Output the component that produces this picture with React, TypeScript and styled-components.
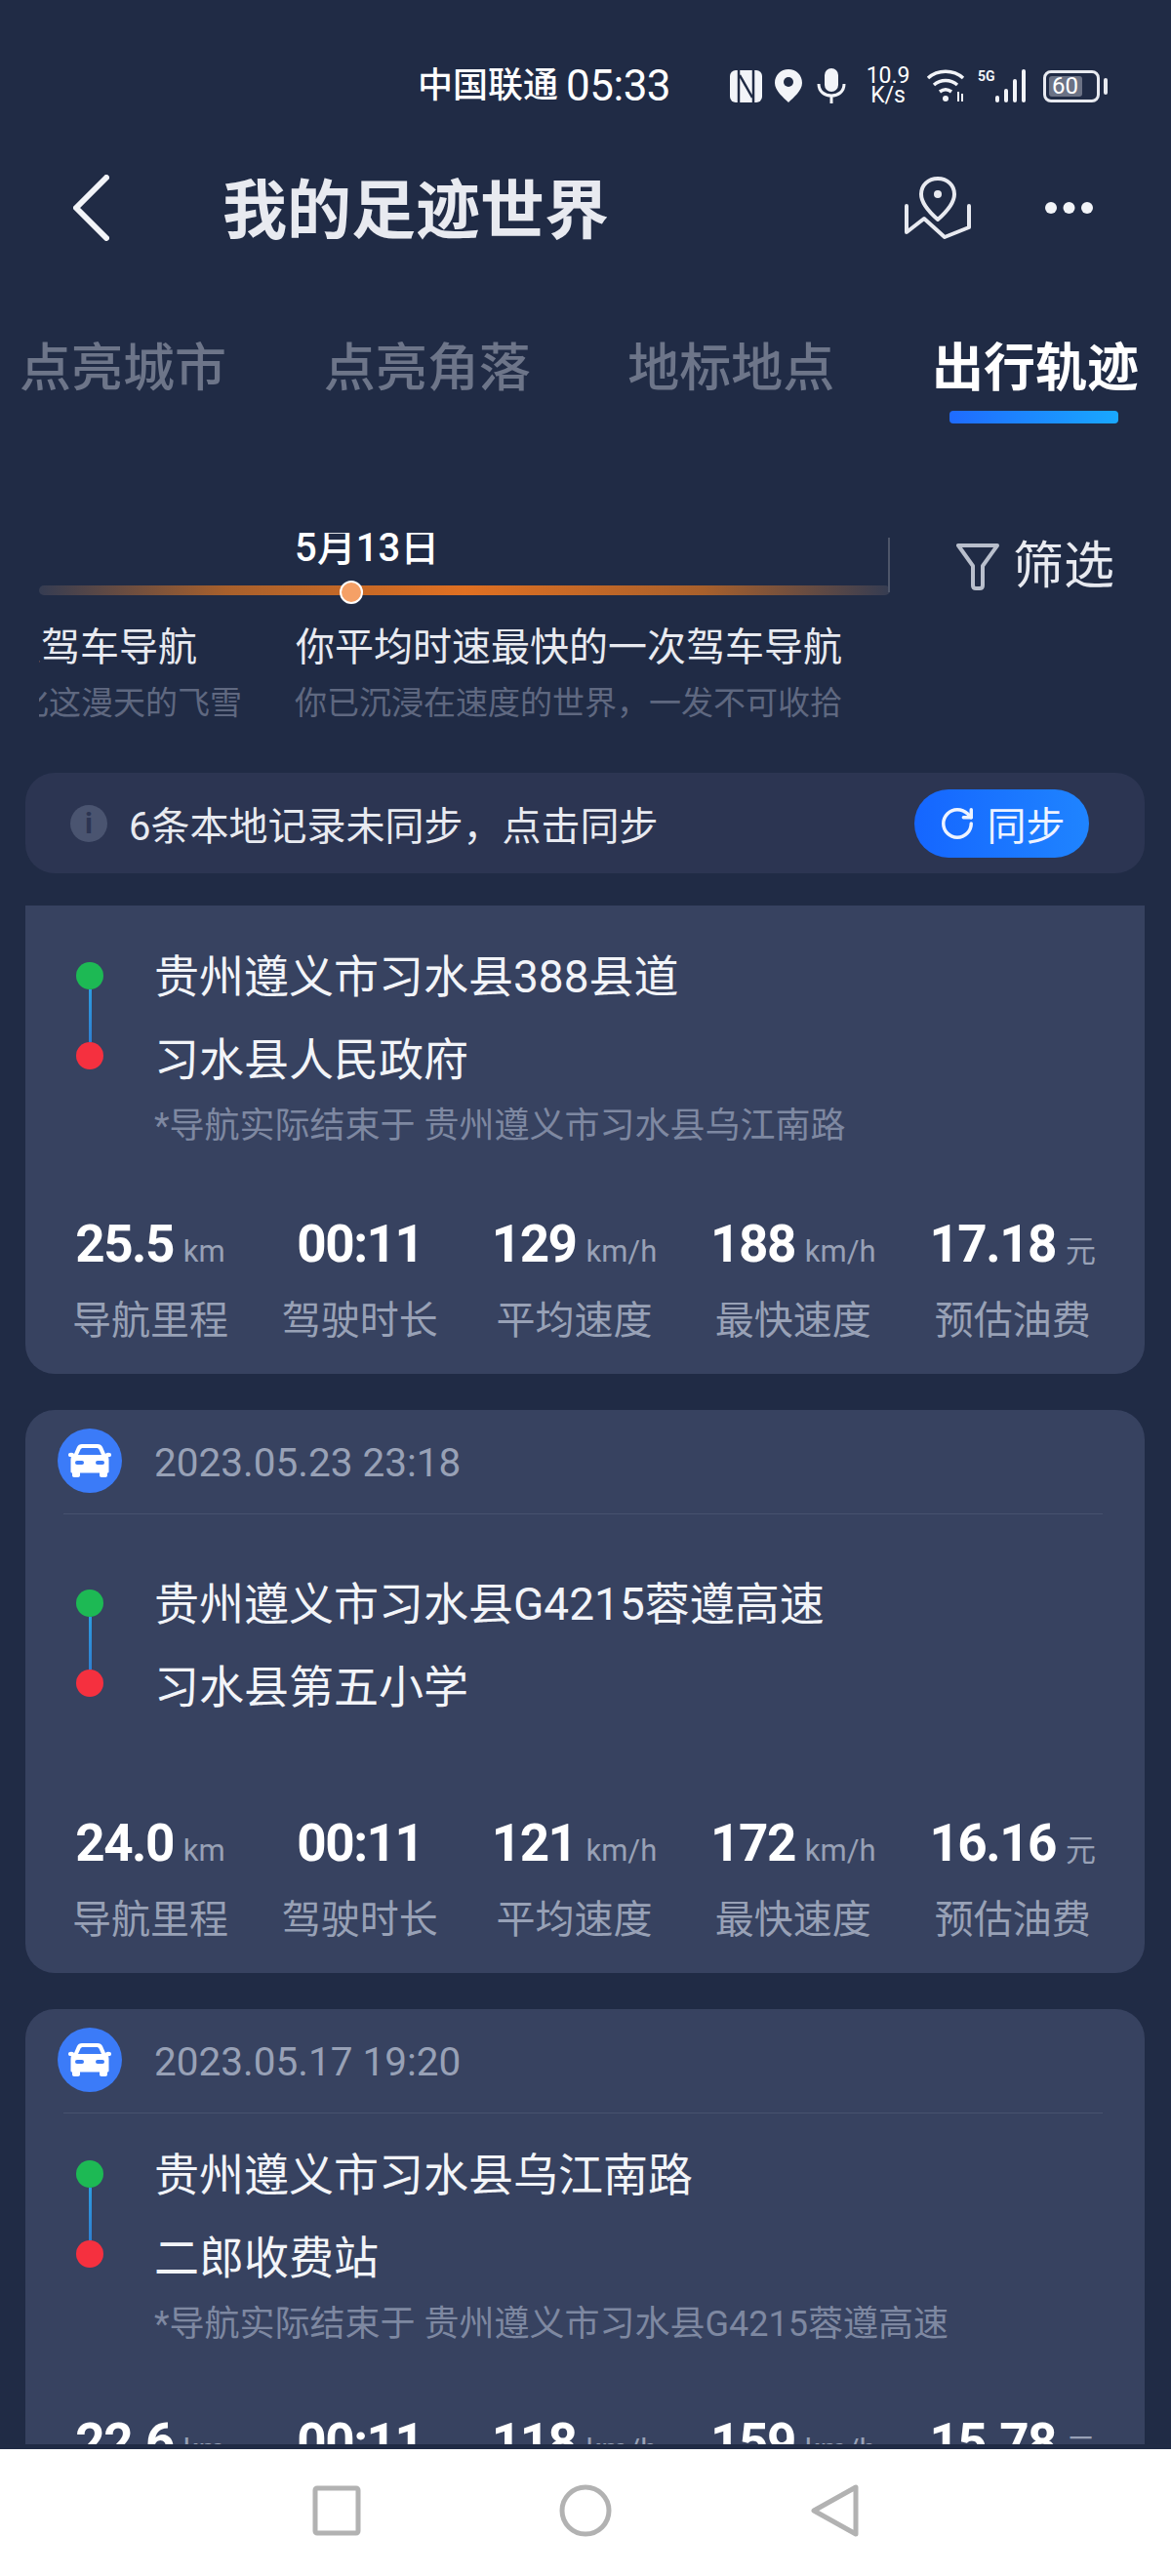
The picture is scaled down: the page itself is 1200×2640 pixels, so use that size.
import styled, { createGlobalStyle } from 'styled-components'
import { RotateCw } from 'lucide-react'

const GlobalStyle = createGlobalStyle`
  html, body {
    margin: 0;
    padding: 0;
    background: #202b45;
  }
  * {
    box-sizing: border-box;
  }
`

const Page = styled.div`
  width: 1200px;
  height: 2640px;
  display: flex;
  flex-direction: column;
  overflow: hidden;
  background: #202b45;
  font-family: Roboto, "Noto Sans CJK SC", sans-serif;
  color: #fff;
`

const Main = styled.div`
  height: 2505px;
  overflow: hidden;
  flex: none;
`

const StatusBar = styled.div`
  height: 108px;
  padding: 68px 67px 0 428px;
  display: flex;
  align-items: center;
`

const Carrier = styled.span`
  font-size: 36px;
  font-weight: 500;
  line-height: 40px;
  white-space: nowrap;
`

const Clock = styled.span`
  font-size: 44px;
  line-height: 40px;
  margin-left: 8px;
  letter-spacing: -0.5px;
`

const StatusIcons = styled.div`
  margin-left: 61px;
  display: flex;
  align-items: center;
`

const Speed = styled.div`
  margin: 0 16px 0 20px;
  width: 46px;
  font-size: 23px;
  line-height: 20px;
  text-align: center;
  white-space: nowrap;
`

const Battery = styled.div`
  margin-left: 13px;
  width: 58px;
  height: 33px;
  padding: 3px;
  border: 3px solid #e8eaf0;
  border-radius: 8px;
  display: flex;
  position: relative;
  &::after {
    content: '';
    position: absolute;
    right: -11px;
    top: 5px;
    width: 4px;
    height: 17px;
    border-radius: 2px;
    background: #e8eaf0;
  }
`

const BatteryFill = styled.div`
  width: 34px;
  background: #6b7285;
  border-radius: 3px;
  font-size: 24px;
  line-height: 21px;
  text-align: left;
  padding-left: 3px;
`

const TitleBar = styled.div`
  margin-top: 55px;
  height: 100px;
  padding: 0 80px 0 75px;
  display: flex;
  align-items: center;
`

const Title = styled.h1`
  margin: 0 0 6px 116px;
  flex: 1;
  font-size: 66px;
  font-weight: 700;
  color: #e8eaf0;
  white-space: nowrap;
`

const TitleActions = styled.div`
  display: flex;
  align-items: center;
  gap: 76px;
`

const Tabs = styled.div`
  margin-top: 78px;
  padding: 0 33px 0 20px;
  display: flex;
  justify-content: space-between;
`

const Tab = styled.div<{ $active?: boolean }>`
  position: relative;
  font-size: 53px;
  line-height: 74px;
  white-space: nowrap;
  font-weight: ${(p) => (p.$active ? 700 : 500)};
  color: ${(p) => (p.$active ? '#fff' : '#6d7589')};
  &::after {
    content: '';
    display: ${(p) => (p.$active ? 'block' : 'none')};
    position: absolute;
    left: 18px;
    right: 21px;
    bottom: -19px;
    height: 13px;
    border-radius: 4px;
    background: linear-gradient(90deg, #1f6bff, #19a8ff);
  }
`

const Timeline = styled.div`
  margin-top: 131px;
  padding-left: 40px;
  display: flex;
  align-items: flex-start;
`

const TimelineBody = styled.div`
  width: 872px;
  overflow: hidden;
  flex: none;
`

const DateLabel = styled.div`
  padding-left: 262px;
  font-size: 40px;
  font-weight: 500;
  line-height: 32px;
`

const Track = styled.div`
  position: relative;
  margin-top: 22px;
  height: 10px;
  border-radius: 5px;
  background: linear-gradient(90deg, #353c52 0%, #a8602c 22%, #e07022 50%, #a8602c 78%, #353c52 100%);
  &::before {
    content: '';
    position: absolute;
    left: 308px;
    top: -5px;
    width: 20px;
    height: 20px;
    border-radius: 50%;
    background: #f5a066;
    border: 2px solid #fff;
  }
  &::after {
    content: '';
    position: absolute;
    right: 0;
    bottom: 3px;
    height: 56px;
    width: 2px;
    background: #4d5569;
  }
`

const Stories = styled.div`
  margin-top: 32px;
  display: flex;
  gap: 54px;
`

const Story = styled.div<{ $clipped?: boolean }>`
  flex: none;
  width: ${(p) => (p.$clipped ? '208px' : 'auto')};
  overflow: hidden;
`

const StoryTitle = styled.div<{ $clipped?: boolean }>`
  font-size: 40px;
  line-height: 44px;
  color: #e8eaf0;
  white-space: nowrap;
  display: flex;
  justify-content: flex-end;
  padding-right: ${(p) => (p.$clipped ? '46px' : '0')};
`

const StorySub = styled.div`
  margin-top: 13px;
  font-size: 33px;
  line-height: 44px;
  color: #5f6880;
  white-space: nowrap;
  display: flex;
  justify-content: flex-end;
`

const FilterButton = styled.div`
  margin: 10px 0 0 68px;
  display: flex;
  align-items: center;
  gap: 14px;
  font-size: 52px;
  line-height: 50px;
  color: #e8eaf0;
  white-space: nowrap;
`

const SyncBanner = styled.div`
  margin: 49px 27px 0 26px;
  height: 103px;
  padding: 0 57px 0 46px;
  border-radius: 30px;
  background: #2c3552;
  display: flex;
  align-items: center;
`

const InfoDot = styled.div`
  width: 38px;
  height: 38px;
  border-radius: 50%;
  background: #4a5470;
  color: #2c3552;
  font-size: 30px;
  font-weight: 700;
  line-height: 38px;
  text-align: center;
  flex: none;
`

const SyncText = styled.div`
  margin-left: 22px;
  flex: 1;
  font-size: 40px;
  color: #e8eaf0;
  white-space: nowrap;
`

const SyncButton = styled.div`
  width: 179px;
  height: 70px;
  border-radius: 35px;
  background: linear-gradient(90deg, #1566ff, #1f84ff);
  display: flex;
  align-items: center;
  justify-content: center;
  gap: 12px;
  font-size: 40px;
  color: #eef3ff;
  white-space: nowrap;
`

const CardList = styled.div`
  margin: 33px 27px 0 26px;
  display: flex;
  flex-direction: column;
  gap: 37px;
`

const Card = styled.div<{ $clipped?: boolean }>`
  padding: ${(p) => (p.$clipped ? '29px' : '19px')} 0 29px;
  background: #374260;
  border-radius: ${(p) => (p.$clipped ? '0 0 30px 30px' : '30px')};
`

const CardHead = styled.div`
  padding-left: 33px;
  display: flex;
  align-items: center;
  gap: 33px;
`

const HeadRule = styled.div`
  margin: 21px 43px 0 39px;
  height: 1px;
  background: #47526f;
`

const CarBadge = styled.div`
  width: 66px;
  height: 66px;
  border-radius: 50%;
  background: #3b7bf8;
  display: flex;
  align-items: center;
  justify-content: center;
  flex: none;
`

const CardDate = styled.div`
  padding-top: 3px;
  font-size: 40.5px;
  color: #98a1b6;
`

const Route = styled.div<{ $offset: number }>`
  margin-top: ${(p) => p.$offset}px;
  padding-left: 52px;
  display: flex;
`

const RouteMarker = styled.div`
  width: 28px;
  padding: 29px 0 31px;
  display: flex;
  flex-direction: column;
  align-items: center;
  flex: none;
`

const MarkerDot = styled.div<{ $color: string }>`
  width: 28px;
  height: 28px;
  border-radius: 50%;
  background: ${(p) => p.$color};
  flex: none;
`

const MarkerLine = styled.div`
  flex: 1;
  width: 3px;
  background: linear-gradient(180deg, #2c9be0, #2f7fd0);
`

const RoutePlaces = styled.div`
  margin-left: 52px;
`

const Place = styled.div`
  height: 85px;
  font-size: 46px;
  line-height: 88px;
  color: #f2f4f8;
  white-space: nowrap;
`

const Note = styled.div`
  height: 29px;
  padding-left: 132px;
  font-size: 36px;
  line-height: 54px;
  color: #7e88a1;
  white-space: nowrap;
`

const Stats = styled.div`
  margin-top: 89px;
  padding: 0 50px 0 48px;
  display: flex;
  justify-content: space-between;
`

const Stat = styled.div`
  text-align: center;
  white-space: nowrap;
`

const StatValue = styled.div`
  height: 60px;
  font-size: 53px;
  font-weight: 700;
  line-height: 60px;
  letter-spacing: -1.5px;
  color: #fff;
`

const StatUnit = styled.span`
  margin-left: 10px;
  font-size: 31px;
  font-weight: 400;
  letter-spacing: 0;
  color: #98a1b6;
`

const StatLabel = styled.div`
  margin-top: 24px;
  font-size: 40px;
  line-height: 50px;
  color: #98a1b6;
`

const NavBar = styled.div`
  margin-top: 5px;
  flex: 1;
  background: #fff;
  display: flex;
  align-items: flex-start;
  justify-content: center;
  gap: 201px;
  padding-top: 36px;
`

const Car = () => (
  <svg width="44" height="34" viewBox="0 0 44 34" fill="#fff">
    <ellipse cx="3" cy="11" rx="3" ry="2.200" />
    <ellipse cx="41" cy="11" rx="3" ry="2.200" />
    <path d="M14 0h16c2.500 0 4 1 5 3l3 7c2.500 1.500 3.500 3.500 3.500 6v12c0 1-.5 1.500-1.500 1.500V32c0 1-.8 2-2 2h-4c-1.200 0-2-1-2-2v-2.500H12V32c0 1-.8 2-2 2H6c-1.200 0-2-1-2-2v-2.500c-1 0-1.500-.5-1.500-1.500V16c0-2.500 1-4.500 3.500-6l3-7c1-2 2.500-3 5-3z" />
    <path d="M15 4h14c1.200 0 2 .5 2.500 1.500L34 11H10l2.500-5.500C13 4.500 13.800 4 15 4z" fill="#3b7bf8" />
    <rect x="7" y="17" width="9" height="4" rx="2" fill="#3b7bf8" />
    <rect x="28" y="17" width="9" height="4" rx="2" fill="#3b7bf8" />
  </svg>
)

type Trip = {
  date?: string
  from: string
  to: string
  note?: string
  stats: [string, string, string, string, string]
}

const trips: Trip[] = [
  {
    from: '贵州遵义市习水县388县道',
    to: '习水县人民政府',
    note: '*导航实际结束于 贵州遵义市习水县乌江南路',
    stats: ['25.5', '00:11', '129', '188', '17.18']
  },
  {
    date: '2023.05.23 23:18',
    from: '贵州遵义市习水县G4215蓉遵高速',
    to: '习水县第五小学',
    stats: ['24.0', '00:11', '121', '172', '16.16']
  },
  {
    date: '2023.05.17 19:20',
    from: '贵州遵义市习水县乌江南路',
    to: '二郎收费站',
    note: '*导航实际结束于 贵州遵义市习水县G4215蓉遵高速',
    stats: ['22.6', '00:11', '118', '159', '15.78']
  }
]

const statMeta = [
  { label: '导航里程', unit: 'km' },
  { label: '驾驶时长', unit: '' },
  { label: '平均速度', unit: 'km/h' },
  { label: '最快速度', unit: 'km/h' },
  { label: '预估油费', unit: '元' }
]

function TripCard({ trip }: { trip: Trip }) {
  const routeOffset = !trip.date ? 0 : trip.note ? 19 : 48
  return (
    <Card $clipped={!trip.date}>
      {trip.date && (
        <>
          <CardHead>
            <CarBadge>
              <Car />
            </CarBadge>
            <CardDate>{trip.date}</CardDate>
          </CardHead>
          <HeadRule />
        </>
      )}
      <Route $offset={routeOffset}>
        <RouteMarker>
          <MarkerDot $color="#1db954" />
          <MarkerLine />
          <MarkerDot $color="#f5303f" />
        </RouteMarker>
        <RoutePlaces>
          <Place>{trip.from}</Place>
          <Place>{trip.to}</Place>
        </RoutePlaces>
      </Route>
      {trip.note && <Note>{trip.note}</Note>}
      <Stats>
        {statMeta.map((meta, i) => (
          <Stat key={meta.label}>
            <StatValue>
              {trip.stats[i]}
              {meta.unit && <StatUnit>{meta.unit}</StatUnit>}
            </StatValue>
            <StatLabel>{meta.label}</StatLabel>
          </Stat>
        ))}
      </Stats>
    </Card>
  )
}

export default function App() {
  return (
    <Page>
      <GlobalStyle />
      <Main>
        <StatusBar>
          <Carrier>中国联通</Carrier>
          <Clock>05:33</Clock>
          <StatusIcons>
            {/* nfc */}
            <svg width="33" height="33" viewBox="0 0 33 33">
              <rect width="33" height="33" rx="6" fill="#f2f4f8" />
              <path d="M9 0v33M24 0v33M10 5l13 23" stroke="#202b45" strokeWidth="2.500" fill="none" />
            </svg>
            {/* location */}
            <svg width="28" height="34" viewBox="0 0 28 34" style={{ marginLeft: 13 }}>
              <path d="M14 0C6 0 0 6 0 14c0 8 9 15 14 20 5-5 14-12 14-20C28 6 22 0 14 0z" fill="#f2f4f8" />
              <circle cx="14" cy="13" r="5" fill="#202b45" />
            </svg>
            {/* mic */}
            <svg width="30" height="36" viewBox="0 0 30 36" style={{ marginLeft: 15 }}>
              <rect x="8" y="0" width="14" height="24" rx="7" fill="#f2f4f8" />
              <path d="M2 16c0 8 6 12 13 12s13-4 13-12M15 28v8" stroke="#f2f4f8" strokeWidth="3" fill="none" />
            </svg>
            <Speed>
              10.9
              <br />
              K/s
            </Speed>
            {/* wifi */}
            <svg width="42" height="36" viewBox="0 0 42 36" fill="none" stroke="#f2f4f8" strokeWidth="3.500">
              <path d="M2 10c10-9 26-9 36 0M8 17c7-6 17-6 24 0M14 24c4-3 8-3 12 0" />
              <circle cx="20" cy="31" r="3" fill="#f2f4f8" stroke="none" />
              <path d="M33 24v10M37 34v-8" strokeWidth="2" />
            </svg>
            {/* signal */}
            <svg width="54" height="34" viewBox="0 0 54 34" style={{ marginLeft: 11 }} fill="#f2f4f8">
              <text x="0" y="12" fontSize="14" fontWeight="700" fontFamily="Roboto, sans-serif">5G</text>
              <rect x="18" y="27" width="4" height="7" rx="2" />
              <rect x="27" y="20" width="4" height="14" rx="2" />
              <rect x="36" y="10" width="4" height="24" rx="2" />
              <rect x="45" y="0" width="4" height="34" rx="2" />
            </svg>
            <Battery>
              <BatteryFill>60</BatteryFill>
            </Battery>
          </StatusIcons>
        </StatusBar>

        <TitleBar>
          <svg width="37" height="68" viewBox="0 0 37 68" fill="none" stroke="#f2f4f8" strokeWidth="6" strokeLinecap="round" strokeLinejoin="round">
            <path d="M34 3L3 34l31 31" />
          </svg>
          <Title>我的足迹世界</Title>
          <TitleActions>
            <svg width="68" height="64" viewBox="0 0 68 64" fill="none" stroke="#e8eaf0" strokeWidth="4" strokeLinecap="round" strokeLinejoin="round">
              <path d="M34 2c-10 0-17 7-17 16 0 9 9 19 17 26 8-7 17-17 17-26 0-9-7-16-17-16z" />
              <circle cx="34" cy="18" r="4" fill="#e8eaf0" stroke="none" />
              <path d="M2 30v27l18-14 21 19 25-10V30" />
            </svg>
            <svg width="49" height="12" viewBox="0 0 49 12" fill="#f2f4f8">
              <circle cx="6" cy="6" r="6" />
              <circle cx="24.500" cy="6" r="6" />
              <circle cx="43" cy="6" r="6" />
            </svg>
          </TitleActions>
        </TitleBar>

        <Tabs>
          <Tab>点亮城市</Tab>
          <Tab>点亮角落</Tab>
          <Tab>地标地点</Tab>
          <Tab $active>出行轨迹</Tab>
        </Tabs>

        <Timeline>
          <TimelineBody>
            <DateLabel>5月13日</DateLabel>
            <Track />
            <Stories>
              <Story $clipped>
                <StoryTitle $clipped>一次驾车导航</StoryTitle>
                <StorySub>化这漫天的飞雪</StorySub>
              </Story>
              <Story>
                <StoryTitle>你平均时速最快的一次驾车导航</StoryTitle>
                <StorySub>你已沉浸在速度的世界，一发不可收拾</StorySub>
              </Story>
            </Stories>
          </TimelineBody>
          <FilterButton>
            <svg width="44" height="50" viewBox="0 0 44 50" fill="none" stroke="#b9bfcc" strokeWidth="4" strokeLinejoin="round">
              <path d="M2 3h40L27 24v20c0 2-1 3-3 3h-4c-2 0-3-1-3-3V24z" />
            </svg>
            筛选
          </FilterButton>
        </Timeline>

        <SyncBanner>
          <InfoDot>i</InfoDot>
          <SyncText>6条本地记录未同步，点击同步</SyncText>
          <SyncButton>
            <RotateCw size={38} strokeWidth={2.2} />
            同步
          </SyncButton>
        </SyncBanner>

        <CardList>
          {trips.map((trip) => (
            <TripCard key={trip.from} trip={trip} />
          ))}
        </CardList>
      </Main>

      <NavBar>
        <svg width="54" height="54" viewBox="0 0 54 54" fill="none" stroke="#b2b2b2" strokeWidth="5" strokeLinejoin="round">
          <rect x="5" y="4" width="44" height="46" rx="2" />
        </svg>
        <svg width="54" height="54" viewBox="0 0 54 54" fill="none" stroke="#b2b2b2" strokeWidth="5">
          <circle cx="27" cy="27" r="24" />
        </svg>
        <svg width="54" height="54" viewBox="0 0 54 54" fill="none" stroke="#b2b2b2" strokeWidth="5" strokeLinejoin="round">
          <path d="M49 3v48L6 27z" />
        </svg>
      </NavBar>
    </Page>
  )
}
